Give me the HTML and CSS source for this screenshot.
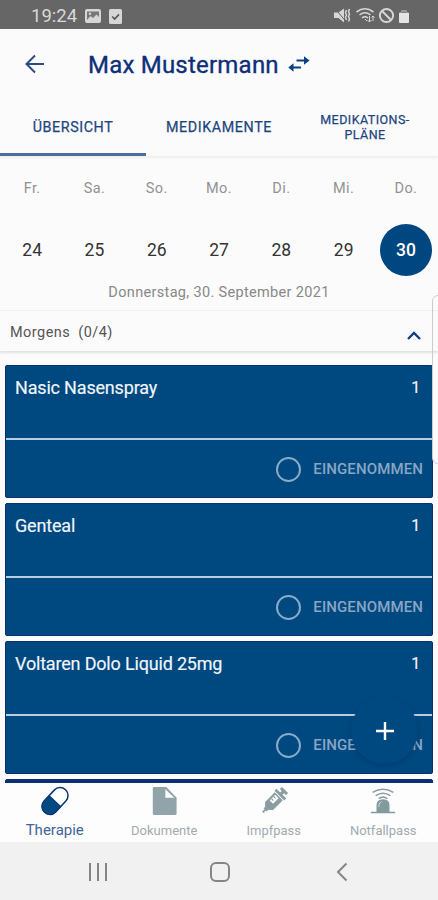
FILE: index.html
```html
<!DOCTYPE html>
<html lang="de">
<head>
<meta charset="utf-8">
<title>Therapie</title>
<link rel="stylesheet" href="styles.css">
</head>
<body>
<div class="phone">
  <div class="status">
    <span class="time">19:24</span>
    <svg class="st-img" width="16" height="14" viewBox="0 0 16 14"><rect width="16" height="14" rx="2" fill="#d6d6d6"/><rect x="2" y="2.500" width="12" height="8.500" fill="#777"/><path d="M2 11l3.500-4 2.500 2 3.500-3.500L14 8v3z" fill="#d6d6d6"/><circle cx="5" cy="4.800" r="1.200" fill="#d6d6d6"/></svg>
    <svg class="st-check" width="13" height="15" viewBox="0 0 13 15"><rect width="13" height="15" rx="1.500" fill="#d6d6d6"/><path d="M3.200 7.500l2.500 2.500 4.300-4.600" fill="none" stroke="#555" stroke-width="1.600"/></svg>
    <svg class="st-right" width="76" height="18" viewBox="0 0 76 18" fill="none" stroke="#d6d6d6">
      <path d="M0 5.500h4.500l5.500-4v14l-5.500-4.500H0z" fill="#d6d6d6" stroke="none"/><path d="M1.500 2l9.500 11.500" stroke="#666" stroke-width="1"/><path d="M12.500 3l-1 2.500 1 2.500-1 2.500 1 2.500M15.500 2l-1 2.500 1 2.500-1 2.500 1 2.500-1 2.500" stroke-width="1.500"/>
      <path d="M22.500 5q8.500-6.500 17 0M25.500 8q5.500-4.500 11 0M28 11q3-2.500 6 0" stroke-width="1.600"/><path d="M31 12l2 2M35.500 9v6m-2-2l2 2 2-2M39 14V9m-1.500 1.500L39 9l1.500 1.500" stroke-width="1"/>
      <circle cx="52.500" cy="8.500" r="6.600" stroke-width="2"/><path d="M48 4l9 9" stroke-width="2"/>
      <path d="M65.500 5.500h2v-2h5v2h2" stroke="#999" fill="#999"/><path d="M65 6h10v9q0 1-1 1h-8q-1 0-1-1z" fill="#e4e4e4" stroke="none"/>
    </svg>
  </div>
  <header class="appbar">
    <svg class="back" width="20" height="20" viewBox="0 0 20 20" fill="none" stroke="#2a4a88" stroke-width="2"><path d="M19 10H2M10 1.500L1.500 10l8.500 8.500"/></svg>
    <h1>Max Mustermann</h1>
    <svg class="swap" width="22" height="16" viewBox="0 0 22 16" fill="#0b3e82"><path d="M8.500 3.600H16V.2l5.500 4.300L16 8.700V5.500H8.500zM13 10.500H5.500V7.300L.3 11.500l5.200 4.200v-3.300H13z"/></svg>
  </header>
  <nav class="tabs">
    <div class="tab active"><span>ÜBERSICHT</span></div>
    <div class="tab"><span>MEDIKAMENTE</span></div>
    <div class="tab small"><span>MEDIKATIONS-<br>PLÄNE</span></div>
  </nav>
  <section class="calendar">
    <div class="week names"><span>Fr.</span><span>Sa.</span><span>So.</span><span>Mo.</span><span>Di.</span><span>Mi.</span><span>Do.</span></div>
    <div class="week days"><span>24</span><span>25</span><span>26</span><span>27</span><span>28</span><span>29</span><span class="selected">30</span></div>
    <div class="date"><span>Donnerstag, 30. September 2021</span></div>
  </section>
  <div class="group">
    <span class="group-name">Morgens&nbsp; (0/4)</span>
    <svg width="14" height="9" viewBox="0 0 14 9" fill="none" stroke="#0b3e82" stroke-width="2.300"><path d="M1 8l6-6 6 6"/></svg>
  </div>
  <main class="list">
    <article class="card"><div class="top"><span>Nasic Nasenspray</span><span class="qty">1</span></div><div class="action"><i class="ring"></i><span class="label">EINGENOMMEN</span></div></article>
    <article class="card"><div class="top"><span>Genteal</span><span class="qty">1</span></div><div class="action"><i class="ring"></i><span class="label">EINGENOMMEN</span></div></article>
    <article class="card"><div class="top"><span>Voltaren Dolo Liquid 25mg</span><span class="qty">1</span></div><div class="action"><i class="ring"></i><span class="label">EINGENOMMEN</span></div></article>
    <article class="card next"></article>
  </main>
  <nav class="bottom">
    <div class="item on"><svg width="30" height="30" viewBox="0 0 30 30"><g transform="rotate(43 15 15)"><rect x="6.500" y="-1.500" width="17" height="33" rx="8.500" fill="#fff" stroke="#0a3578" stroke-width="1.600"/><path d="M6.500 15h17v8a8.500 8.500 0 0 1-17 0z" fill="#004880" stroke="#0a3578"/></g></svg><span>Therapie</span></div>
    <div class="item"><svg width="30" height="30" viewBox="0 0 30 30"><path d="M4.500 0h13L28.500 11.500V28.500q0 1.500-1.500 1.500H4.500Q3 30 3 28.500v-27Q3 0 4.500 0z" fill="#90a4a9"/><path d="M16.500 2.500V11.500H26z" fill="#fff"/></svg><span>Dokumente</span></div>
    <div class="item"><svg width="30" height="30" viewBox="0 0 30 30"><g transform="rotate(45 15 15)" fill="#8b9da1"><path d="M10-3h10v3.500h-3V3h-4V.500h-3zM7 3h16v3.200H7zM8.500 7.200h13V23l-3.500 3.500h-6L8.500 23zM12.500 26h5v3.500h-1.500v4h-2v-4h-1.500z"/><path d="M11 9h5.500v9H11z" fill="#fff"/><path d="M11 11h3v1.300h-3zM11 14.500h3v1.300h-3z"/></g></svg><span>Impfpass</span></div>
    <div class="item"><svg width="30" height="30" viewBox="0 0 30 30"><g fill="none" stroke="#8b9da1" stroke-width="1.800"><path d="M3 5Q15-2 27 5M6.500 8.800q8.500-5.500 17 0M10 12.200q5-3.400 10 0"/></g><path d="M7.500 27.500V20q0-7 7.500-7t7.500 7v7.500h6.500V29H1v-1.500z" fill="#839a9f"/><path d="M10.300 22v-2q0-3 3-4" fill="none" stroke="#dbe4e5"/></svg><span>Notfallpass</span></div>
  </nav>
  <footer class="system">
    <svg width="20" height="20" viewBox="0 0 20 20" stroke="#858585" stroke-width="2"><path d="M2 1v18M10 1v18M18 1v18"/></svg>
    <svg width="20" height="20" viewBox="0 0 20 20" fill="none" stroke="#858585" stroke-width="2"><rect x="1" y="1" width="18" height="18" rx="5"/></svg>
    <svg width="20" height="20" viewBox="0 0 20 20" fill="none" stroke="#858585" stroke-width="2"><path d="M14.500 1.500L6 10l8.500 8.500"/></svg>
  </footer>
  <button class="fab" aria-label="+"><svg width="18" height="18" viewBox="0 0 18 18" stroke="#fff" stroke-width="2.400"><path d="M9 0v18M0 9h18"/></svg></button>
  <div class="edge"></div>
</div>
</body>
</html>
```

FILE: styles.css
```css
* { box-sizing: border-box; }
body { margin: 0; font-family: Roboto, "Liberation Sans", sans-serif; background: #fbfbfc; }
.phone { position: relative; width: 438px; height: 900px; overflow: hidden; display: flex; flex-direction: column; background: #fbfbfc; }
.phone > * { flex-shrink: 0; }
span { white-space: nowrap; }
svg { display: block; overflow: visible; }

.status { height: 29px; background: #666; display: flex; align-items: center; padding: 3px 28px 0 31px; color: #d9d9d9; }
.time { font-size: 18.500px; width: 54px; }
.st-check { margin-left: 8px; }
.st-right { margin-left: auto; }

.appbar { height: 70px; display: flex; align-items: center; padding-left: 25px; }
h1 { margin: 2px 0 0 43px; font-size: 24px; font-weight: 400; letter-spacing: .22px; color: #0f2f78; -webkit-text-stroke: .35px #0f2f78; width: 200px; white-space: nowrap; }

.tabs { height: 57px; display: grid; grid-template-columns: repeat(3, 1fr); color: #1d4680; font-size: 14.300px; font-weight: 400; letter-spacing: .6px; -webkit-text-stroke: .25px #1d4680; box-shadow: 0 2px 2px #eee; }
.tab { display: flex; align-items: center; justify-content: center; text-align: center; border-bottom: 3px solid transparent; padding-top: 2px; }
.tab.active { border-color: #4a6f9e; }
.tab.small { font-size: 12.500px; line-height: 15px; letter-spacing: .45px; }

.calendar { height: 154px; }
.week { display: grid; grid-template-columns: repeat(7, 62.300px); margin-left: 1px; justify-items: center; align-items: center; }
.names { height: 64px; font-size: 14.500px; letter-spacing: .4px; color: #929292; }
.days { height: 60px; font-size: 17.500px; color: #333; }
.selected { width: 52px; height: 52px; border-radius: 50%; background: #004680; color: #fff; font-weight: 500; display: flex; align-items: center; justify-content: center; }
.date { height: 30px; line-height: 25px; text-align: center; font-size: 14.500px; letter-spacing: .33px; color: #888; }

.group { height: 41px; display: flex; align-items: center; justify-content: space-between; padding: 2px 17px 0 10px; border-top: 1px solid #f0f0f0; box-shadow: 0 2px 2px #e2e2e2; color: #555; font-size: 14.500px; letter-spacing: .45px; }
.group svg { margin-top: 7px; }

.list { height: 432px; padding: 14px 5px 0; display: flex; flex-direction: column; gap: 5px; overflow: hidden; }
.card { height: 133px; flex-shrink: 0; background: #004880; border: 1px solid #0a2f72; border-radius: 2px; color: #f1f5fa; }
.card.next { background: #0a2f72; }
.top { height: 74px; border-bottom: 2px solid #b9cde0; padding: 10px 12px 0 9px; display: flex; justify-content: space-between; font-size: 18px; letter-spacing: -.18px; line-height: 24px; -webkit-text-stroke: .15px #f1f5fa; }
.qty { font-size: 16px; }
.action { height: 57px; display: flex; align-items: center; justify-content: flex-end; padding: 1px 9px 0 0; color: #88a6c4; font-weight: 500; font-size: 15px; letter-spacing: .12px; }
.ring { width: 25px; height: 25px; border: 2.500px solid #88abc8; border-radius: 50%; margin-right: 12px; }

.bottom { height: 59px; display: grid; grid-template-columns: repeat(4, 1fr); background: #fdfdfe; color: #a2aaae; font-size: 13px; }
.item { display: flex; flex-direction: column; align-items: center; padding-top: 3px; }
.item svg { width: 28px; height: 30px; }
.item:nth-child(3) svg, .item:nth-child(4) svg { width: 26px; }
.item span { line-height: 18px; margin-top: 6px; }
.item.on { color: #3f6596; font-size: 15px; }
.item.on span { margin-top: 5px; }
.system { height: 58px; background: #f1f1f1; display: flex; justify-content: space-between; align-items: center; padding: 2px 86px 0 88px; }
.fab { position: absolute; left: 351px; top: 697px; width: 67px; height: 67px; padding: 0; border: 0; border-radius: 50%; background: #004880; display: flex; align-items: center; justify-content: center; box-shadow: 0 2px 4px rgba(0,35,75,.3); }
.edge { position: absolute; left: 432px; top: 295px; width: 12px; height: 169px; border: 1px solid #ccc; border-radius: 6px; }
```
